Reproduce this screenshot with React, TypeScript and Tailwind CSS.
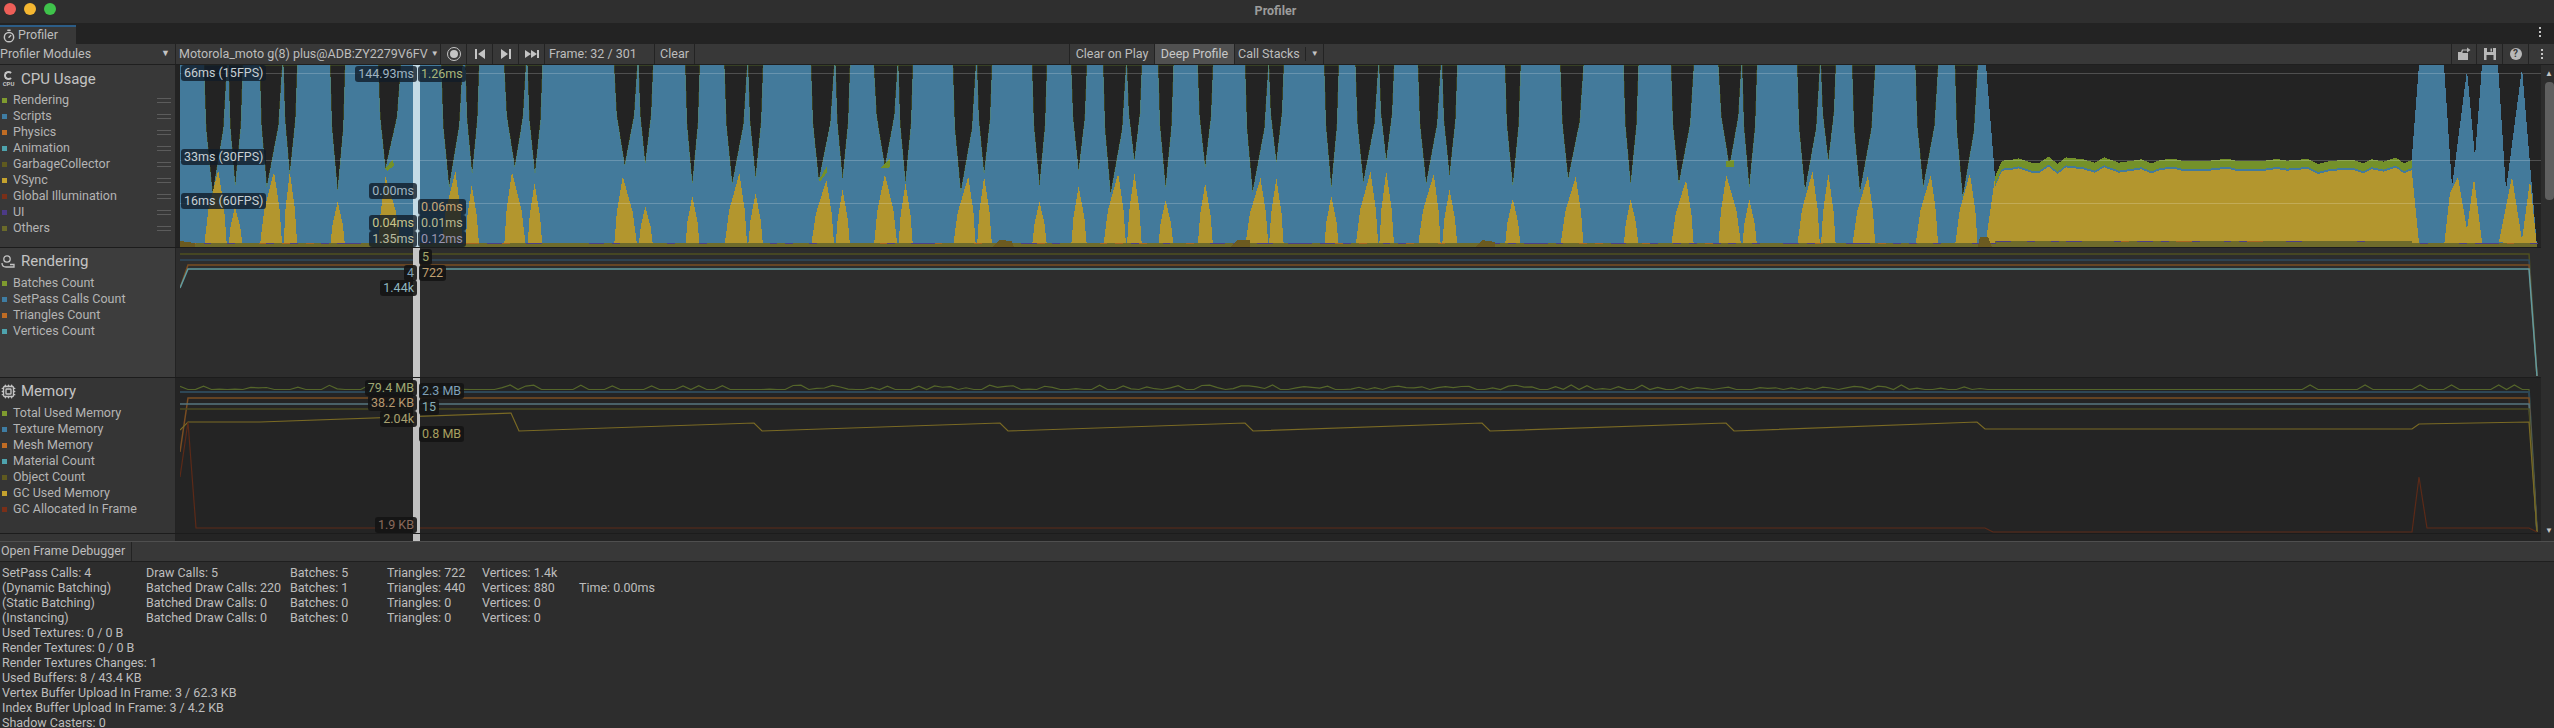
import { Cpu, Timer } from 'lucide-react'

// [gap start, gap end, gap tip x, gap tip y, peak x, peak y] as read off the chart, grouped by x offset
const spikeGroups: { offset: number; spikes: number[][] }[] = [
  {
    offset: 170,
    spikes: [
      [86, 144, 108, 400, 122, 330], [148, 184, 165, 375, 164, 440], [227, 284, 245, 380, 263, 335],
      [287, 322, 303, 340, 303, 335], [405, 443, 424, 390, 424, 425], [527, 584, 545, 325, 545, 350],
      [686, 740, 706, 380, 722, 335], [747, 782, 764, 340, 763, 375], [845, 900, 872, 320, 865, 335],
      [904, 942, 923, 340, 922, 370], [1123, 1182, 1150, 315, 1145, 350], [1185, 1222, 1202, 310, 1202, 440],
      [1303, 1340, 1321, 370, 1321, 408], [1402, 1460, 1422, 370, 1440, 340], [1462, 1500, 1481, 350, 1481, 400],
    ],
  },
  {
    offset: 790,
    spikes: [
      [53, 112, 73, 360, 92, 360], [115, 152, 133, 355, 133, 390], [212, 272, 240, 320, 240, 342],
      [274, 311, 292, 365, 292, 370], [412, 470, 432, 395, 451, 350], [473, 511, 491, 340, 491, 350],
      [612, 650, 631, 375, 631, 425], [711, 751, 730, 330, 730, 380], [792, 850, 811, 400, 830, 340],
      [852, 890, 871, 300, 871, 340], [931, 970, 950, 380, 950, 420], [1031, 1070, 1050, 320, 1050, 370],
      [1151, 1210, 1170, 395, 1190, 355], [1211, 1249, 1230, 305, 1230, 355], [1351, 1388, 1369, 380, 1369, 408],
      [1430, 1488, 1450, 365, 1468, 335], [1490, 1528, 1508, 300, 1508, 333],
    ],
  },
  {
    offset: 1410,
    spikes: [
      [20, 78, 41, 370, 60, 342], [81, 120, 100, 345, 100, 388], [240, 280, 260, 375, 260, 415],
      [380, 439, 400, 355, 419, 350], [540, 578, 558, 370, 558, 418], [660, 718, 680, 370, 698, 360],
      [780, 838, 808, 320, 800, 345], [840, 878, 858, 380, 858, 418], [979, 1037, 999, 390, 1018, 335],
      [1039, 1077, 1058, 300, 1058, 342], [1118, 1177, 1138, 395, 1158, 348], [1278, 1336, 1298, 380, 1317, 345],
      [1378, 1436, 1398, 410, 1416, 340],
    ],
  },
]

const spikes = spikeGroups.flatMap((group) =>
  group.spikes.map(([a, b, tipX, tipY, peakX, peakY]) => ({
    a: group.offset + a / 2.529,
    b: group.offset + b / 2.529,
    tipX: group.offset + tipX / 2.529,
    tipY: 60 + tipY / 3,
    peakX: group.offset + peakX / 2.529,
    peakY: 60 + peakY / 3,
  })),
)

// top edge of the long flat stretch at the right of the cpu chart
const plateau = [
  [228, 530], [245, 482], [265, 480], [285, 475], [315, 488], [335, 488], [357, 470], [378, 492], [398, 472],
  [440, 478], [468, 488], [490, 472], [525, 488], [580, 478], [603, 490], [625, 480], [655, 476], [680, 483],
  [735, 483], [785, 476], [810, 483], [870, 483], [903, 477], [930, 482], [978, 477], [1003, 492], [1035, 482],
  [1088, 480], [1112, 490], [1132, 478], [1160, 485], [1190, 473], [1210, 490], [1228, 480],
].map(([u, v]) => [1900 + u / 2.4, v / 3])

const pts = (list: number[][]) => list.map((p) => p.join(',')).join(' ')
const shift = (dy: number) => plateau.map(([x, y]) => [x, y + dy])

const noise = (i: number) => {
  const h = Math.sin(i * 12.9898) * 43758.5453
  return h - Math.floor(h)
}

const FRAME = 7.86
const frames = Array.from({ length: 300 }, (_, i) => i)

const C = {
  green: '#7f9b2f',
  blue: '#3f7da3',
  orange: '#c06c24',
  teal: '#4ea3ad',
  olive: '#5f5a1f',
  yellow: '#c4a22e',
  red: '#7a2f18',
  purple: '#4c3a86',
  other: '#6a6a2a',
}

const cpuLegend = [
  ['Rendering', C.green], ['Scripts', C.blue], ['Physics', C.orange], ['Animation', C.teal],
  ['GarbageCollector', C.olive], ['VSync', C.yellow], ['Global Illumination', C.red], ['UI', C.purple], ['Others', C.other],
]
const renderingLegend = [
  ['Batches Count', C.green], ['SetPass Calls Count', C.blue], ['Triangles Count', C.orange], ['Vertices Count', C.teal],
]
const memoryLegend = [
  ['Total Used Memory', C.green], ['Texture Memory', C.blue], ['Mesh Memory', C.orange], ['Material Count', C.teal],
  ['Object Count', C.olive], ['GC Used Memory', C.yellow], ['GC Allocated In Frame', C.red],
]

function Legend({ items, handles }: { items: string[][]; handles?: boolean }) {
  return (
    <div className="flex flex-col">
      {items.map(([name, color]) => (
        <div key={name} className="flex h-4 items-center pl-[2px] pr-[4px]">
          <span className="mr-[6px] h-[5px] w-[5px]" style={{ background: color }} />
          <span className="flex-1 text-[12.5px] text-[#b4b4b4]">{name}</span>
          {handles && (
            <span className="flex h-[5px] w-[14px] flex-col justify-between">
              <span className="h-px bg-[#5c5c5c]" />
              <span className="h-px bg-[#5c5c5c]" />
            </span>
          )}
        </div>
      ))}
    </div>
  )
}

function Tip({ className, color, children }: { className: string; color: string; children: string }) {
  return (
    <div className={`absolute flex h-4 items-center whitespace-nowrap rounded-[3px] px-[3px] text-[12.5px] ${className}`} style={{ color }}>
      {children}
    </div>
  )
}

function ToolButton({ className, children }: { className: string; children: React.ReactNode }) {
  return <div className={`flex h-full shrink-0 items-center border-r border-[#232323] ${className}`}>{children}</div>
}

function CpuChart() {
  return (
    <svg width="2361" height="182" viewBox="180 65 2361 182" className="absolute left-[4px] top-0" shapeRendering="crispEdges">
      <rect x="180" y="65" width="2357" height="182" fill="#437a9b" />
      {spikes.map((s, i) => {
        const midY = (65 + s.tipY) / 2
        const left = s.a + (s.tipX - s.a) * 0.25
        const right = s.b - (s.b - s.tipX) * 0.25
        return (
          <polygon
            key={i}
            points={`${s.a},65 ${s.b},65 ${right},${midY} ${s.tipX},${s.tipY} ${left},${midY}`}
            fill="#232323"
            stroke="#6f8f2a"
            strokeOpacity="0.45"
            strokeWidth="0.6"
          />
        )
      })}
      <polygon points={pts([[1986, 65], [2419, 65], ...[...plateau].reverse(), [1986, 65]])} fill="#232323" />
      <polygon points="2444,65 2452,187 2467,70 2475,157 2482,65" fill="#232323" />
      <polygon points="2498,65 2506,190 2522,68 2537,247 2541,247 2541,65" fill="#232323" />
      {/* small green wedges at some of the gap tips */}
      <polygon points="385,169 393,159 394,166 387,171" fill="#74912a" />
      <polygon points="880,168 890,158 890,166 888,168" fill="#74912a" />
      <polygon points="1726,161 1734,160 1734,167 1726,167" fill="#74912a" />
      <polygon points="819,180 827,166 827,172 820,182" fill="#74912a" />
      {/* yellow triangles, a little fuller than straight sides */}
      {spikes.map((s, i) => {
        const midY = (247 + s.peakY) / 2
        const left = s.a + (s.peakX - s.a) * 0.32
        const right = s.b - (s.b - s.peakX) * 0.32
        return <polygon key={i} points={`${s.a},247 ${left},${midY} ${s.peakX},${s.peakY} ${right},${midY} ${s.b},247`} fill="#b3962e" />
      })}
      <polygon points="1986,240 1995,178 1995,247 1986,247" fill="#b3962e" />
      <polygon points="2412,173 2419,243 2412,247" fill="#b3962e" />
      <polygon points="2444,247 2450,193 2458,177 2467,230 2474,178 2482,242 2482,247" fill="#b3962e" />
      <polygon points="2499,242 2512,177 2522,240 2530,180 2537,247" fill="#b3962e" />
      {/* flat stretch */}
      <polygon points={pts([...plateau, ...shift(10).reverse()])} fill="#437a9b" />
      <polygon points={pts([...plateau, ...shift(8).reverse()])} fill="#74912a" />
      <polygon points={pts([...shift(10), [2412, 247], [1995, 247]])} fill="#b3962e" />
      {/* others band along the bottom */}
      <rect x="180" y="243" width="2357" height="4" fill="#6e6b2b" />
      <rect x="1995" y="241" width="417" height="6" fill="#6e6b2b" />
      {frames.map((i) => {
        const n = noise(i)
        if (n < 0.55) return null
        return <rect key={i} x={180 + i * FRAME} y={i * FRAME > 1815 && i * FRAME < 2232 ? 240.5 : 242.5} width={FRAME} height="1" fill={n > 0.9 ? '#a8641f' : '#4c3f86'} />
      })}
      <polygon points="992,247 1000,240 1012,241 1014,247" fill="#6b5a20" />
      <polygon points="1230,247 1238,240 1250,240 1250,247" fill="#6b5a20" />
      <polygon points="1475,247 1482,240 1495,242 1495,247" fill="#6b5a20" />
      <polygon points="1978,247 1980,237 1988,237 1992,247" fill="#6b5a20" />
      <polygon points="180,247 180,241 195,243 195,247" fill="#6b5a20" />
      {/* target frame rate lines */}
      <rect x="180" y="73" width="2361" height="1" fill="#ffffff" fillOpacity="0.2" />
      <rect x="180" y="160" width="2361" height="1" fill="#ffffff" fillOpacity="0.2" />
      <rect x="180" y="203" width="2361" height="1" fill="#ffffff" fillOpacity="0.2" />
    </svg>
  )
}

function RenderingChart() {
  return (
    <svg width="2361" height="129" viewBox="180 248 2361 129" className="absolute left-[4px] top-0" fill="none" strokeWidth="1.5">
      <polyline points="180,254 2529,254 2537,376" stroke="#4f5020" />
      <polyline points="180,260 2529,260 2537,376" stroke="#2f4a5e" />
      <polyline points="180,288 188,265 2529,265 2537,376" stroke="#7a4d22" />
      <polyline points="180,288 188,269 2529,269 2537,376" stroke="#5f9ba0" />
    </svg>
  )
}

function MemoryChart() {
  const bumps = [2308, 2364, 2419, 2451, 2498, 2513]
  const total = frames.map((i) => {
    const x = 180 + i * FRAME
    if (x > 1985) {
      const hit = bumps.some((b) => Math.abs(b - x) < FRAME / 2)
      return [x, hit ? 385 : 389.5]
    }
    return [x, noise(i + 11) > 0.45 ? 389.5 - 4.5 * noise(i + 77) : 389.5]
  })
  return (
    <svg width="2361" height="155" viewBox="180 378 2361 155" className="absolute left-[4px] top-0" fill="none" strokeWidth="1.2">
      <polyline points={pts([...total.filter(([x]) => x < 2529), [2529, 389.5], [2537, 532]])} stroke="#55662a" />
      <polyline points="180,392 2529,392 2537,532" stroke="#2e4756" strokeWidth="2" />
      <polyline points="180,452 188,398 2529,398 2537,532" stroke="#7a4d22" strokeWidth="1.5" />
      <polyline points="180,404 2529,404 2537,532" stroke="#56767f" strokeWidth="1.5" />
      <polyline points="180,409 2529,409 2537,532" stroke="#4a4a20" strokeWidth="1.5" />
      <polyline
        points="180,430 188,422 260,422 511,413 519,431 754,423 762,431 1000,423 1008,431 1245,423 1253,431 1482,423 1490,431 1726,423 1734,431 1977,422 1985,429 2412,429 2419,424 2529,422 2537,532"
        stroke="#7a6a24"
      />
      <polyline points="180,477 188,422 196,528 1985,528 1993,532 2412,532 2419,477 2427,528 2529,528 2537,532" stroke="#5c2a18" />
    </svg>
  )
}

function LoadIcon() {
  return (
    <svg width="16" height="16" viewBox="0 0 16 16" fill="#b8b8b8">
      <path d="M2 6h4l1 1h5v7H2z" />
      <path d="M5 6l1-2.500h5V1.500L14.500 4 11 6.500V4.600H7L6.500 6z" />
    </svg>
  )
}

function SaveIcon() {
  return (
    <svg width="14" height="14" viewBox="0 0 14 14" fill="#b8b8b8">
      <path d="M1 1h12v12H1zM4 1v4h6V1zM3.500 8v5h7V8z" fillRule="evenodd" />
      <path d="M7.500 1.500h1.500v3H7.500z" />
    </svg>
  )
}

function CursorLine({ color, className, children }: { color: string; className: string; children: React.ReactNode }) {
  return (
    <div className={`absolute left-[237px] w-[7px] ${className}`}>
      <div className="absolute inset-0" style={{ background: color }} />
      {children}
    </div>
  )
}

const detailColumns = [
  ['SetPass Calls: 4', 'Draw Calls: 5', 'Batches: 5', 'Triangles: 722', 'Vertices: 1.4k', ''],
  ['(Dynamic Batching)', 'Batched Draw Calls: 220', 'Batches: 1', 'Triangles: 440', 'Vertices: 880', 'Time: 0.00ms'],
  ['(Static Batching)', 'Batched Draw Calls: 0', 'Batches: 0', 'Triangles: 0', 'Vertices: 0', ''],
  ['(Instancing)', 'Batched Draw Calls: 0', 'Batches: 0', 'Triangles: 0', 'Vertices: 0', ''],
]
const detailLines = [
  'Used Textures: 0 / 0 B',
  'Render Textures: 0 / 0 B',
  'Render Textures Changes: 1',
  'Used Buffers: 8 / 43.4 KB',
  'Vertex Buffer Upload In Frame: 3 / 62.3 KB',
  'Index Buffer Upload In Frame: 3 / 4.2 KB',
  'Shadow Casters: 0',
]

export default function App() {
  const cpuTip = 'bg-[#101c28]/80'
  const darkTip = 'bg-[#141414]/90'

  return (
    <div className="flex h-[728px] w-[2554px] flex-col overflow-hidden bg-[#2d2d2d] font-[Roboto,sans-serif] text-[12.5px] text-[#bdbdbd]">
      {/* title bar */}
      <div className="relative flex h-[23px] shrink-0 items-center justify-center bg-[#2f2f2f] pr-[3px]">
        <div className="absolute left-[4px] top-[3px] flex gap-2">
          <span className="h-3 w-3 rounded-full bg-[#ee5f58]" />
          <span className="h-3 w-3 rounded-full bg-[#f5b731]" />
          <span className="h-3 w-3 rounded-full bg-[#3fc34b]" />
        </div>
        <span className="text-[12.5px] font-bold text-[#9c9c9c]">Profiler</span>
      </div>

      {/* tab strip */}
      <div className="flex h-[21px] shrink-0 items-end justify-between bg-[#232323]">
        <div className="flex h-[19px] w-[76px] items-center gap-[2px] border-t-2 border-[#2c5d87] bg-[#383838] pl-[2px] text-[#bdbdbd]">
          <Timer size={14} strokeWidth={2.5} className="text-[#c4c4c4]" />
          <span>Profiler</span>
        </div>
        <div className="mb-[7px] mr-[13px] flex flex-col gap-[2px]">
          <span className="h-[2px] w-[2px] bg-[#c4c4c4]" />
          <span className="h-[2px] w-[2px] bg-[#c4c4c4]" />
          <span className="h-[2px] w-[2px] bg-[#c4c4c4]" />
        </div>
      </div>

      {/* toolbar */}
      <div className="flex h-[21px] shrink-0 items-center border-b border-[#1f1f1f] bg-[#383838]">
        <ToolButton className="w-[176px] justify-between pr-[5px]">
          <span>Profiler Modules</span>
          <span className="text-[9px] text-[#c4c4c4]">▼</span>
        </ToolButton>
        <ToolButton className="w-[265px] justify-start gap-[3px] pl-[3px]">
          <span>Motorola_moto g(8) plus@ADB:ZY2279V6FV</span>
          <span className="text-[8px] text-[#c4c4c4]">▼</span>
        </ToolButton>
        <ToolButton className="w-[26px] justify-center">
          <span className="flex h-[14px] w-[14px] items-center justify-center rounded-full border-[1.5px] border-[#c4c4c4]">
            <span className="h-2 w-2 rounded-full bg-[#c4c4c4]" />
          </span>
        </ToolButton>
        <ToolButton className="w-[26px] justify-center">
          <svg width="12" height="12" viewBox="0 0 12 12" fill="#c4c4c4"><path d="M1 1h2v10H1zM11 1v10L4 6z" /></svg>
        </ToolButton>
        <ToolButton className="w-[26px] justify-center">
          <svg width="12" height="12" viewBox="0 0 12 12" fill="#c4c4c4"><path d="M1 1v10l7-5zM9 1h2v10H9z" /></svg>
        </ToolButton>
        <ToolButton className="w-[26px] justify-center">
          <svg width="16" height="12" viewBox="0 0 16 12" fill="#c4c4c4"><path d="M1 2v8l6-4zM7 2v8l6-4zM13 2h2v8h-2z" /></svg>
        </ToolButton>
        <ToolButton className="w-[110px] justify-start pl-[4px]">Frame: 32 / 301</ToolButton>
        <ToolButton className="w-[40px] justify-center">Clear</ToolButton>
        <div className="h-full w-[375px] shrink-0 border-r border-[#232323]" />
        <ToolButton className="w-[85px] justify-center">Clear on Play</ToolButton>
        <ToolButton className="w-[80px] justify-center bg-[#505050] text-[#c8c8c8]">Deep Profile</ToolButton>
        <ToolButton className="w-[89px] justify-start gap-[5px] pl-[3px]">
          <span>Call Stacks</span>
          <span className="h-[14px] w-px bg-[#232323]" />
          <span className="text-[8px] text-[#c4c4c4]">▼</span>
        </ToolButton>
        <div className="h-full w-[1128px] shrink-0 border-r border-[#232323]" />
        <ToolButton className="w-[25px] justify-center"><LoadIcon /></ToolButton>
        <ToolButton className="w-[26px] justify-center"><SaveIcon /></ToolButton>
        <ToolButton className="w-[26px] justify-center">
          <span className="flex h-[12px] w-[12px] items-center justify-center rounded-full bg-[#b8b8b8] text-[10px] font-bold leading-none text-[#383838]">?</span>
        </ToolButton>
        <div className="flex flex-1 flex-col items-center gap-[2px]">
          <span className="h-[2px] w-[2px] bg-[#c4c4c4]" />
          <span className="h-[2px] w-[2px] bg-[#c4c4c4]" />
          <span className="h-[2px] w-[2px] bg-[#c4c4c4]" />
        </div>
      </div>

      {/* modules */}
      <div className="flex h-[476px] shrink-0">
        <div className="flex w-[2541px] shrink-0 flex-col">
          {/* cpu */}
          <div className="flex h-[183px] shrink-0 border-b border-[#1c1c1c]">
            <div className="w-[176px] shrink-0 border-r border-[#232323] bg-[#383838]">
              <div className="flex h-[27px] items-center gap-[5px] pl-[1px] pt-[1px]">
                <div className="flex w-[15px] flex-col items-center">
                  <span className="h-[9px] w-[9px] rounded-full border-2 border-[#c4c4c4] border-r-transparent" />
                  <span className="text-[6px] font-bold leading-[7px] text-[#c4c4c4]">CPU</span>
                </div>
                <span className="text-[15px] text-[#c4c4c4]">CPU Usage</span>
              </div>
              <Legend items={cpuLegend} handles />
            </div>
            <div className="relative flex-1 bg-[#232323]">
              <CpuChart />
              <Tip className={`left-[5px] top-0 ${cpuTip}`} color="#c8d0d4">66ms (15FPS)</Tip>
              <Tip className={`left-[5px] top-[84px] ${cpuTip}`} color="#c8d0d4">33ms (30FPS)</Tip>
              <Tip className={`left-[5px] top-[128px] ${cpuTip}`} color="#c8d0d4">16ms (60FPS)</Tip>
              <CursorLine color="#c4dbe6" className="inset-y-0">
                <Tip className={`right-[3px] top-[1px] ${cpuTip}`} color="#9fb4c2">144.93ms</Tip>
                <Tip className={`left-[5px] top-[1px] ${cpuTip}`} color="#a9b67a">1.26ms</Tip>
                <Tip className={`right-[3px] top-[118px] ${cpuTip}`} color="#a0b4c0">0.00ms</Tip>
                <Tip className={`left-[5px] top-[134px] ${cpuTip}`} color="#c8a878">0.06ms</Tip>
                <Tip className={`right-[3px] top-[150px] ${cpuTip}`} color="#c9c58a">0.04ms</Tip>
                <Tip className={`left-[5px] top-[150px] ${cpuTip}`} color="#b8b890">0.01ms</Tip>
                <Tip className={`right-[3px] top-[166px] ${cpuTip}`} color="#b8bba0">1.35ms</Tip>
                <Tip className={`left-[5px] top-[166px] ${cpuTip}`} color="#9a94b0">0.12ms</Tip>
              </CursorLine>
            </div>
          </div>

          {/* rendering */}
          <div className="flex h-[130px] shrink-0 border-b border-[#1c1c1c]">
            <div className="w-[176px] shrink-0 border-r border-[#232323] bg-[#3d3d3d]">
              <div className="flex h-[27px] items-center gap-[5px] pl-[1px]">
                <svg width="15" height="15" viewBox="0 0 15 15" fill="none" stroke="#c4c4c4" strokeWidth="1.3">
                  <circle cx="6" cy="5" r="3.2" />
                  <path d="M1 9c0 3 2 4 4 4h8v-2.500H9" />
                </svg>
                <span className="text-[15px] text-[#c4c4c4]">Rendering</span>
              </div>
              <Legend items={renderingLegend} />
            </div>
            <div className="relative flex-1 bg-[#2d2d2d]">
              <RenderingChart />
              <CursorLine color="#c6c6c6" className="inset-y-0">
                <Tip className={`left-[6px] top-[1px] ${darkTip}`} color="#a5a86a">5</Tip>
                <Tip className={`right-[3px] top-[17px] ${darkTip}`} color="#7fa0b8">4</Tip>
                <Tip className={`left-[6px] top-[17px] ${darkTip}`} color="#c0a070">722</Tip>
                <Tip className={`right-[3px] top-[32px] ${darkTip}`} color="#90b8c0">1.44k</Tip>
              </CursorLine>
            </div>
          </div>

          {/* memory */}
          <div className="flex h-[156px] shrink-0 border-b border-[#1c1c1c]">
            <div className="w-[176px] shrink-0 border-r border-[#232323] bg-[#353535]">
              <div className="flex h-[27px] items-center gap-[5px] pl-[1px]">
                <Cpu size={15} strokeWidth={2.2} className="text-[#c4c4c4]" />
                <span className="text-[15px] text-[#c4c4c4]">Memory</span>
              </div>
              <Legend items={memoryLegend} />
            </div>
            <div className="relative flex-1 bg-[#242424]">
              <MemoryChart />
              <CursorLine color="#c0c0c0" className="inset-y-0">
                <Tip className={`right-[3px] top-[2px] ${darkTip}`} color="#9fa874">79.4 MB</Tip>
                <Tip className={`left-[6px] top-[5px] ${darkTip}`} color="#7fa0b8">2.3 MB</Tip>
                <Tip className={`right-[3px] top-[17px] ${darkTip}`} color="#b8986e">38.2 KB</Tip>
                <Tip className={`left-[6px] top-[21px] ${darkTip}`} color="#88b0b8">15</Tip>
                <Tip className={`right-[3px] top-[33px] ${darkTip}`} color="#a8a070">2.04k</Tip>
                <Tip className={`left-[6px] top-[48px] ${darkTip}`} color="#a8a060">0.8 MB</Tip>
                <Tip className={`right-[3px] top-[139px] ${darkTip}`} color="#8a6a5c">1.9 KB</Tip>
              </CursorLine>
            </div>
          </div>

          {/* next module, cut off by the details pane */}
          <div className="flex min-h-0 flex-1 overflow-hidden">
            <div className="w-[176px] shrink-0 border-r border-[#232323] bg-[#353535] pl-[21px] pt-[5px] text-[15px] leading-[18px] text-[#c4c4c4]">Audio</div>
            <div className="relative flex-1 bg-[#242424]">
              <div className="absolute inset-y-0 left-[237px] w-[7px] bg-[#c0c0c0]" />
            </div>
          </div>
        </div>

        {/* scrollbar */}
        <div className="ml-[3px] flex flex-1 flex-col items-center">
          <span className="mt-[5px] text-[8px] leading-[8px] text-[#c4c4c4]">▲</span>
          <div className="mt-[4px] h-[118px] w-[9px] rounded-[4px] bg-[#5f5f5f]" />
          <span className="mt-[327px] text-[8px] leading-[8px] text-[#c4c4c4]">▼</span>
        </div>
      </div>

      {/* details */}
      <div className="flex h-[21px] shrink-0 items-center border-y border-t-[#4f4f4f] border-b-[#1f1f1f] bg-[#383838]">
        <div className="flex h-full w-[132px] items-center border-r border-[#232323] pl-[1px]">Open Frame Debugger</div>
      </div>
      <div className="min-h-0 flex-1 pl-[2px] pt-[3px] leading-[15px]">
        <div className="grid grid-cols-[144px_144px_97px_95px_97px_1fr]">
          {detailColumns.flat().map((text, i) => (
            <div key={i} className="h-[15px] whitespace-nowrap">{text}</div>
          ))}
        </div>
        {detailLines.map((line) => (
          <div key={line} className="h-[15px]">{line}</div>
        ))}
      </div>
    </div>
  )
}
